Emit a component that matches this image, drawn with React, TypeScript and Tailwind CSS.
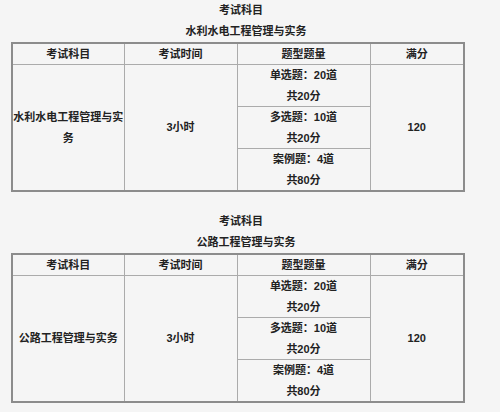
import React from "react"

interface ExamTableProps {
  title: string
  subject: string
}

const questionTypes = [
  { name: "单选题：20道", score: "共20分" },
  { name: "多选题：10道", score: "共20分" },
  { name: "案例题：4道", score: "共80分" },
]

const cell = "border border-[#ababab] text-center align-middle p-0"

function ExamTable({ title, subject }: ExamTableProps) {
  return (
    <section>
      {/* Titles */}
      <div className="w-[482px] text-center leading-[21px]">
        <p>考试科目</p>
        <p className="pl-[10px]">{title}</p>
      </div>

      {/* Table */}
      <table className="ml-[11px] w-[452px] table-fixed border-collapse border-2 border-[#8c8c8c]">
        <colgroup>
          <col className="w-[112px]" />
          <col className="w-[113px]" />
          <col className="w-[133px]" />
          <col className="w-[94px]" />
        </colgroup>
        <thead className="leading-[20px]">
          <tr>
            <td className={cell}>考试科目</td>
            <td className={cell}>考试时间</td>
            <td className={cell}>题型题量</td>
            <td className={cell}>满分</td>
          </tr>
        </thead>
        <tbody className="leading-[20.5px]">
          {questionTypes.map((q, i) => (
            <tr key={q.name}>
              {i === 0 && (
                <>
                  <td rowSpan={3} className={cell}>
                    {subject}
                  </td>
                  <td rowSpan={3} className={cell}>
                    3小时
                  </td>
                </>
              )}
              <td className={cell}>
                <div>{q.name}</div>
                <div>{q.score}</div>
              </td>
              {i === 0 && (
                <td rowSpan={3} className={cell}>
                  120
                </td>
              )}
            </tr>
          ))}
        </tbody>
      </table>
    </section>
  )
}

export default function App() {
  return (
    <div
      className="w-[500px] h-[412px] bg-[#f5f5f5] text-[11px] font-bold text-[#222]"
      style={{ fontFamily: '"Liberation Sans", "Noto Sans CJK SC", sans-serif' }}
    >
      <ExamTable title="水利水电工程管理与实务" subject="水利水电工程管理与实务" />
      <div className="h-[19px]" />
      <ExamTable title="公路工程管理与实务" subject="公路工程管理与实务" />
    </div>
  )
}
